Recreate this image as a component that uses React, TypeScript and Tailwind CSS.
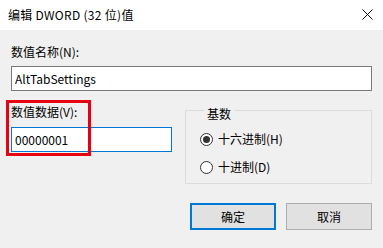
const font = "font-['Segoe_UI','Noto_Sans_CJK_SC',sans-serif]";

function Radio({ checked, label }: { checked?: boolean; label: string }) {
  return (
    <label className="flex h-4 items-center gap-[5px]">
      <span className="flex h-[13px] w-[13px] items-center justify-center rounded-full border border-[#333333] bg-white">
        {checked && <span className="h-[7px] w-[7px] rounded-full bg-[#333333]" />}
      </span>
      <span>{label}</span>
    </label>
  );
}

export default function App() {
  return (
    <div className={`h-[248px] w-[383px] overflow-hidden bg-[#f0f0f0] text-[12px] leading-4 text-black ${font}`}>
      <div className="flex h-[30px] items-center justify-between bg-white pl-2 pr-[10px]">
        <span className="tracking-[0.3px]">编辑 DWORD (32 位)值</span>
        <svg width="11" height="11" viewBox="0 0 11 11" className="mt-[-1px]">
          <path d="M0.5 0.5 L10.5 10.5 M10.5 0.5 L0.5 10.5" stroke="#111" strokeWidth="1" />
        </svg>
      </div>

      <div className="px-[11px]">
        <div className="mt-[14px]">数值名称(N):</div>
        <div className="mt-[6px] flex h-[25px] items-center border border-[#7a7a7a] bg-white pl-[3px]">
          AltTabSettings
        </div>

        <div className="mt-[11px] flex gap-[13px]">
          <div className="relative w-[161px]">
            <div className="mt-[2px]">数值数据(V):</div>
            <div className="mt-[7px] flex h-[25px] items-center border border-[#0078d7] bg-white pl-[3px]">
              00000001
            </div>
            <div className="pointer-events-none absolute left-[-5px] top-[-2px] h-[56px] w-[85px] border-[3px] border-[#e60012]" />
          </div>

          <fieldset className="flex-1 border border-[#dcdcdc] pb-[8px] pl-[14px]">
            <legend className="ml-[4px] px-[3px]">
              <span className="inline-block translate-y-[4px]">基数</span>
            </legend>
            <div className="mt-[13px] flex flex-col gap-3">
              <Radio checked label="十六进制(H)" />
              <Radio label="十进制(D)" />
            </div>
          </fieldset>
        </div>

        <div className="mt-[19px] flex justify-end gap-[10px]">
          <button className="h-[27px] w-[86px] border-2 border-[#0078d7] bg-[#e1e1e1]">确定</button>
          <button className="h-[27px] w-[86px] border border-[#adadad] bg-[#e1e1e1]">取消</button>
        </div>
      </div>
    </div>
  );
}
